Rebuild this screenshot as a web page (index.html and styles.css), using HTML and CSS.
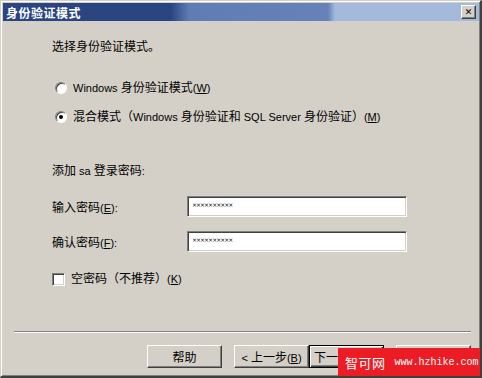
FILE: index.html
```html
<!DOCTYPE html>
<html>
<head>
<meta charset="utf-8">
<link rel="stylesheet" href="styles.css">
</head>
<body>
<div class="window">
  <div class="titlebar">
    <span class="title">身份验证模式</span>
    <span class="close">&#x2715;</span>
  </div>
  <div class="content">
    <div class="line intro"><span>选择身份验证模式。</span></div>
    <div class="line opt opt1"><span class="radio"></span><span><span class="lat">Windows </span>身份验证模式<span class="lat">(<u>W</u>)</span></span></div>
    <div class="line opt opt2"><span class="radio checked"></span><span>混合模式（<span class="lat">Windows </span>身份验证和<span class="lat"> SQL Server </span>身份验证）<span class="lat">(<u>M</u>)</span></span></div>
    <div class="line add"><span>添加<span class="lat"> sa </span>登录密码<span class="lat">:</span></span></div>
    <div class="field f1"><span class="label">输入密码<span class="lat">(<u>E</u>):</span></span><span class="input">××××××××××</span></div>
    <div class="field f2"><span class="label">确认密码<span class="lat">(<u>F</u>):</span></span><span class="input">××××××××××</span></div>
    <div class="line opt chk"><span class="checkbox"></span><span>空密码（不推荐）<span class="lat">(<u>K</u>)</span></span></div>
  </div>
  <div class="footer">
    <div class="sep"></div>
    <div class="buttons">
      <span class="btn"><span>帮助</span></span>
      <span class="pair">
        <span class="btn"><span><span class="lat">&lt; </span>上一步<span class="lat">(<u>B</u>)</span></span></span>
        <span class="btn default"><span>下一步<span class="lat">(<u>N</u>) &gt;</span></span></span>
      </span>
      <span class="btn"><span>取消</span></span>
    </div>
  </div>
  <div class="watermark"><span class="wm-cn">智可网</span><span class="wm-url">www.hzhike.com</span></div>
</div>
</body>
</html>
```
FILE: styles.css
```css
html, body {
  margin: 0;
  padding: 0;
  background: #d4d0c8;
}
body {
  font-family: "Liberation Sans", "Noto Sans CJK SC", sans-serif;
  font-size: 12px;
  color: #000;
}
.lat {
  font-size: 11px;
}
.window {
  position: relative;
  width: 482px;
  height: 378px;
  box-sizing: border-box;
  border-style: solid;
  border-width: 1px 2px 2px 1px;
  border-color: #d4d0c8 #404040 #404040 #d4d0c8;
  box-shadow: inset 1px 1px 0 #fff, inset -1px -1px 0 #808080;
  padding: 2px 1px 1px 2px;
  display: flex;
  flex-direction: column;
  overflow: hidden;
}
.titlebar {
  height: 18px;
  display: flex;
  align-items: center;
  justify-content: space-between;
  padding: 0 3px 0 3px;
  background: linear-gradient(to right, #2b4583 0, #2b4583 168px, #5f7cb4 186px, #6682b8 325px, #a3badc 332px, #a3badc 100%);
}
.title {
  color: #fff;
  font-weight: bold;
  font-size: 12px;
  letter-spacing: 0.5px;
}
.close {
  width: 15px;
  height: 14px;
  box-sizing: border-box;
  background: #d4d0c8;
  border: 1px solid;
  border-color: #fff #404040 #404040 #fff;
  box-shadow: inset -1px -1px 0 #808080;
  font-size: 9px;
  font-weight: bold;
  line-height: 12px;
  text-align: center;
  font-family: "DejaVu Sans", sans-serif;
}
.content {
  padding-left: 49px;
  display: flex;
  flex-direction: column;
}
.line {
  height: 16px;
  line-height: 16px;
  display: flex;
  align-items: center;
  white-space: nowrap;
}
.intro { margin-top: 18px; }
.opt1 { margin-top: 25px; margin-left: 3px; }
.opt2 { margin-top: 13px; margin-left: 3px; }
.add { margin-top: 38px; }
.opt { gap: 6px; }
.radio {
  width: 12px;
  height: 12px;
  box-sizing: border-box;
  border-radius: 50%;
  background: #fff;
  border: 1px solid;
  border-color: #808080 #fff #fff #808080;
  box-shadow: inset 1px 1px 0 #404040;
  position: relative;
  flex: none;
}
.radio.checked::after {
  content: "";
  position: absolute;
  left: 3px;
  top: 3px;
  width: 4px;
  height: 4px;
  border-radius: 50%;
  background: #000;
}
.field {
  display: flex;
  align-items: center;
  height: 21px;
}
.f1 { margin-top: 17px; }
.f2 { margin-top: 14px; }
.label {
  width: 135px;
  white-space: nowrap;
}
.input {
  width: 220px;
  height: 21px;
  box-sizing: border-box;
  background: #fff;
  border: 1px solid;
  border-color: #808080 #fff #fff #808080;
  box-shadow: inset 1px 1px 0 #404040, inset -1px -1px 0 #d4d0c8;
  font-size: 6px;
  line-height: 10px;
  padding: 3px 0 0 4px;
  letter-spacing: -1px;
  font-family: "DejaVu Sans", sans-serif;
  color: #000;
  white-space: nowrap;
}
.chk { margin-top: 19px; gap: 6px; }
.checkbox {
  width: 13px;
  height: 13px;
  box-sizing: border-box;
  background: #fff;
  border: 1px solid;
  border-color: #808080 #fff #fff #808080;
  box-shadow: inset 1px 1px 0 #404040, inset -1px -1px 0 #d4d0c8;
  flex: none;
}
.footer {
  margin-top: auto;
  padding-bottom: 7px;
}
.sep {
  margin: 0 8px 0 11px;
  border-top: 1px solid #808080;
  border-bottom: 1px solid #fff;
}
.buttons {
  display: flex;
  justify-content: flex-end;
  gap: 12px;
  padding-right: 8px;
  margin-top: 12px;
}
.pair { display: flex; }
.btn {
  width: 75px;
  height: 23px;
  box-sizing: border-box;
  border: 1px solid;
  border-color: #fff #404040 #404040 #fff;
  box-shadow: inset -1px -1px 0 #808080;
  display: flex;
  align-items: center;
  justify-content: center;
  white-space: nowrap;
  font-size: 12px;
}
.btn.default {
  border: 1px solid #000;
  box-shadow: inset 1px 1px 0 #fff, inset -1px -1px 0 #404040, inset -2px -2px 0 #808080;
  justify-content: flex-start;
  padding-left: 4px;
}
.watermark {
  position: absolute;
  right: 0;
  bottom: 0;
  width: 142px;
  height: 28px;
  background: #ec1c24;
  color: #fff;
  display: flex;
  align-items: center;
  gap: 9px;
  padding-left: 7px;
  box-sizing: border-box;
  white-space: nowrap;
}
.wm-cn {
  font-size: 13px;
  font-family: "Noto Sans CJK SC", sans-serif;
  letter-spacing: 0.5px;
  flex: none;
}
.wm-url {
  font-family: "Liberation Mono", monospace;
  font-size: 10px;
  flex: none;
}
```
